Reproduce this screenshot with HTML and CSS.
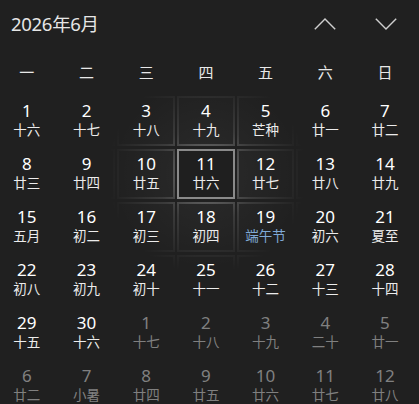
FILE: index.html
```
<!DOCTYPE html>
<html lang="zh-CN">
<head>
<meta charset="utf-8">
<title>2026年6月</title>
<link rel="stylesheet" href="styles.css">
</head>
<body>
<div class="cal">
  <div class="header">
    <div class="title">2026年6月</div>
    <div class="navs">
      <button class="nav" aria-label="上一月"><svg width="22" height="12" viewBox="0 0 22 12"><polyline points="0.8,11.2 11,1 21.2,11.2" fill="none" stroke="#cfcfcf" stroke-width="1.4"/></svg></button>
      <button class="nav" aria-label="下一月"><svg width="22" height="12" viewBox="0 0 22 12"><polyline points="0.8,0.8 11,11 21.2,0.8" fill="none" stroke="#cfcfcf" stroke-width="1.4"/></svg></button>
    </div>
  </div>
  <div class="weekdays">
    <span>一</span><span>二</span><span>三</span><span>四</span><span>五</span><span>六</span><span>日</span>
  </div>
  <div class="grid">
    <div class="cell"><span class="n">1</span><span class="l">十六</span></div>
    <div class="cell"><span class="n">2</span><span class="l">十七</span></div>
    <div class="cell"><span class="n">3</span><span class="l">十八</span></div>
    <div class="cell"><span class="n">4</span><span class="l">十九</span></div>
    <div class="cell"><span class="n">5</span><span class="l">芒种</span></div>
    <div class="cell"><span class="n">6</span><span class="l">廿一</span></div>
    <div class="cell"><span class="n">7</span><span class="l">廿二</span></div>

    <div class="cell"><span class="n">8</span><span class="l">廿三</span></div>
    <div class="cell"><span class="n">9</span><span class="l">廿四</span></div>
    <div class="cell"><span class="n">10</span><span class="l">廿五</span></div>
    <div class="cell focus"><span class="n">11</span><span class="l">廿六</span></div>
    <div class="cell"><span class="n">12</span><span class="l">廿七</span></div>
    <div class="cell"><span class="n">13</span><span class="l">廿八</span></div>
    <div class="cell"><span class="n">14</span><span class="l">廿九</span></div>

    <div class="cell"><span class="n">15</span><span class="l">五月</span></div>
    <div class="cell"><span class="n">16</span><span class="l">初二</span></div>
    <div class="cell"><span class="n">17</span><span class="l">初三</span></div>
    <div class="cell"><span class="n">18</span><span class="l">初四</span></div>
    <div class="cell"><span class="n">19</span><span class="l fest">端午节</span></div>
    <div class="cell"><span class="n">20</span><span class="l">初六</span></div>
    <div class="cell"><span class="n">21</span><span class="l">夏至</span></div>

    <div class="cell"><span class="n">22</span><span class="l">初八</span></div>
    <div class="cell"><span class="n">23</span><span class="l">初九</span></div>
    <div class="cell"><span class="n">24</span><span class="l">初十</span></div>
    <div class="cell"><span class="n">25</span><span class="l">十一</span></div>
    <div class="cell"><span class="n">26</span><span class="l">十二</span></div>
    <div class="cell"><span class="n">27</span><span class="l">十三</span></div>
    <div class="cell"><span class="n">28</span><span class="l">十四</span></div>

    <div class="cell"><span class="n">29</span><span class="l">十五</span></div>
    <div class="cell"><span class="n">30</span><span class="l">十六</span></div>
    <div class="cell other"><span class="n">1</span><span class="l">十七</span></div>
    <div class="cell other"><span class="n">2</span><span class="l">十八</span></div>
    <div class="cell other"><span class="n">3</span><span class="l">十九</span></div>
    <div class="cell other"><span class="n">4</span><span class="l">二十</span></div>
    <div class="cell other"><span class="n">5</span><span class="l">廿一</span></div>

    <div class="cell other"><span class="n">6</span><span class="l">廿二</span></div>
    <div class="cell other"><span class="n">7</span><span class="l">小暑</span></div>
    <div class="cell other"><span class="n">8</span><span class="l">廿四</span></div>
    <div class="cell other"><span class="n">9</span><span class="l">廿五</span></div>
    <div class="cell other"><span class="n">10</span><span class="l">廿六</span></div>
    <div class="cell other"><span class="n">11</span><span class="l">廿七</span></div>
    <div class="cell other"><span class="n">12</span><span class="l">廿八</span></div>
  </div>
</div>
</body>
</html>
```
FILE: styles.css
```
html, body {
  margin: 0;
  padding: 0;
  background: #202020;
  overflow: hidden;
}
body {
  width: 419px;
  height: 404px;
  font-family: "Noto Sans", "Noto Sans CJK SC", sans-serif;
  color: #fff;
}
.cal {
  display: flex;
  flex-direction: column;
}
.header {
  height: 47px;
  display: flex;
  align-items: center;
  justify-content: space-between;
}
.title {
  padding-left: 11px;
  font-size: 18.5px;
  color: #e6e6e6;
  letter-spacing: -0.3px;
  margin-top: -1px;
}
.navs {
  display: flex;
  gap: 1px;
  padding-right: 3px;
  height: 100%;
}
.nav {
  width: 60px;
  height: 100%;
  border: 0;
  background: transparent;
  padding: 0;
  display: flex;
  align-items: center;
  justify-content: center;
}
.weekdays {
  height: 49px;
  margin-left: -2px;
  display: grid;
  grid-template-columns: repeat(7, 57.7px);
  column-gap: 2px;
  align-items: center;
  font-family: "Liberation Sans", "Noto Sans CJK SC", sans-serif;
  font-size: 15px;
  color: #e8e8e8;
}
.weekdays span {
  text-align: center;
}
.grid {
  margin-left: -2px;
  display: grid;
  grid-template-columns: repeat(7, 57.7px);
  grid-auto-rows: 50px;
  column-gap: 2px;
  row-gap: 3px;
}
.cell {
  box-sizing: border-box;
  border: 2px solid transparent;
  background:
    radial-gradient(circle at 207px 174px, rgba(255,255,255,0.05), rgba(255,255,255,0) 95px) padding-box fixed,
    linear-gradient(#202020, #202020) padding-box,
    radial-gradient(circle at 207px 174px, rgba(255,255,255,0.42), rgba(255,255,255,0.12) 50px, rgba(255,255,255,0) 100px) border-box fixed;
  display: flex;
  flex-direction: column;
  align-items: center;
  padding-top: 3px;
}
.cell.focus {
  border-color: #8a8a8a;
  background: #1f1f1f;
}
.n {
  font-size: 17px;
  line-height: 20px;
  height: 20px;
}
.l {
  font-family: "Liberation Sans", "Noto Sans CJK SC", sans-serif;
  font-size: 13.5px;
  line-height: 16px;
  margin-top: 2px;
  color: #ececec;
}
.l.fest {
  color: #7fa9d6;
}
.other .n,
.other .l {
  color: #808080;
}
```
